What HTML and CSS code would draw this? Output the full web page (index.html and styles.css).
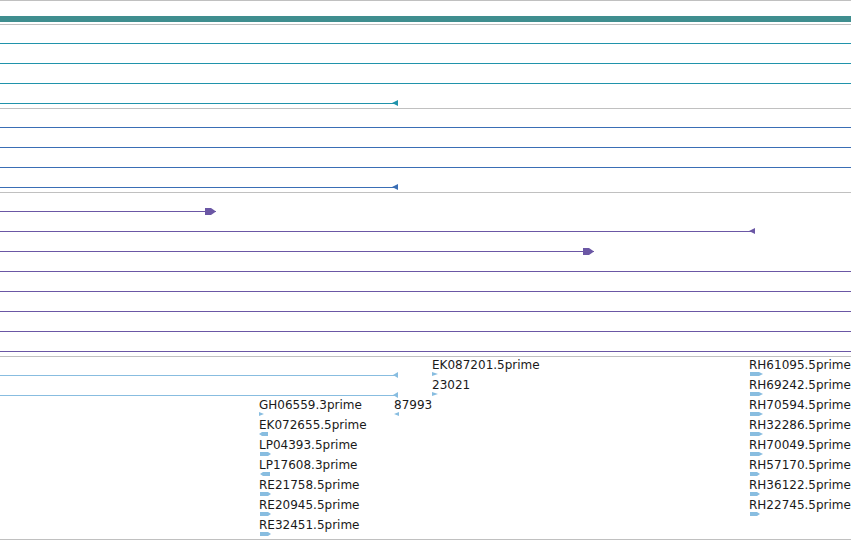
FILE: index.html
```html
<!DOCTYPE html>
<html lang="en">

<head>
    <meta charset="UTF-8">
    <title>Tracks</title>
    <link rel="stylesheet" href="styles.css">
</head>

<body>
    <div class="browser">
        <div class="overview">
            <div class="overview-bar"></div>
        </div>

        <div class="track teal">
            <div class="row"><div class="feat full"></div></div>
            <div class="row"><div class="feat full"></div></div>
            <div class="row"><div class="feat full"></div></div>
            <div class="row">
                <div class="feat" style="width: 398px">
                    <svg class="head-left" width="6" height="6"><polygon points="6,0 6,6 0,3" /></svg>
                </div>
            </div>
        </div>

        <div class="track blue">
            <div class="row"><div class="feat full"></div></div>
            <div class="row"><div class="feat full"></div></div>
            <div class="row"><div class="feat full"></div></div>
            <div class="row">
                <div class="feat" style="width: 398px">
                    <svg class="head-left" width="6" height="6"><polygon points="6,0 6,6 0,3" /></svg>
                </div>
            </div>
        </div>

        <div class="track purple">
            <div class="row">
                <div class="feat" style="width: 216px">
                    <svg class="head-right" width="11" height="7"><polygon points="0,0 6,0 11,3.5 6,7 0,7" /></svg>
                </div>
            </div>
            <div class="row">
                <div class="feat" style="width: 755px">
                    <svg class="head-left" width="6" height="6"><polygon points="6,0 6,6 0,3" /></svg>
                </div>
            </div>
            <div class="row">
                <div class="feat" style="width: 594px">
                    <svg class="head-right" width="11" height="7"><polygon points="0,0 6,0 11,3.5 6,7 0,7" /></svg>
                </div>
            </div>
            <div class="row"><div class="feat full"></div></div>
            <div class="row"><div class="feat full"></div></div>
            <div class="row"><div class="feat full"></div></div>
            <div class="row"><div class="feat full"></div></div>
            <div class="row"><div class="feat full"></div></div>
        </div>

        <div class="track labels">
            <div class="row">
                <div class="feat" style="width: 398px">
                    <svg class="head-left" width="5" height="6"><polygon points="5,0 5,6 0,3" /></svg>
                </div>
            </div>
            <div class="row">
                <div class="feat" style="width: 398px">
                    <svg class="head-left" width="5" height="6"><polygon points="5,0 5,6 0,3" /></svg>
                </div>
            </div>

            <!-- label stacks sit at their genome positions -->
            <div class="stack" style="left: 432px; top: 0px">
                <div class="item"><span class="name">EK087201.5prime</span><svg class="glyph" width="6" height="4"><polygon points="0,0 6,2 0,4" /></svg></div>
                <div class="item"><span class="name">23021</span><svg class="glyph" width="6" height="4"><polygon points="0,0 6,2 0,4" /></svg></div>
            </div>

            <div class="stack" style="left: 394px; top: 40px">
                <div class="item"><span class="name">87993</span><svg class="glyph" width="5" height="4"><polygon points="5,0 0,2 5,4" /></svg></div>
            </div>

            <div class="stack" style="left: 259px; top: 40px">
                <div class="item"><span class="name">GH06559.3prime</span><svg class="glyph" width="5" height="4"><polygon points="0,0 5,2 0,4" /></svg></div>
                <div class="item"><span class="name">EK072655.5prime</span><svg class="glyph" width="9" height="4"><polygon points="3,0 9,0 9,4 3,4 0,2" /></svg></div>
                <div class="item"><span class="name">LP04393.5prime</span><svg class="glyph" width="12" height="4"><polygon points="1,0 9,0 12,2 9,4 1,4" /></svg></div>
                <div class="item"><span class="name">LP17608.3prime</span><svg class="glyph" width="11" height="4"><polygon points="4,0 11,0 11,4 4,4 1,2" /></svg></div>
                <div class="item"><span class="name">RE21758.5prime</span><svg class="glyph" width="12" height="4"><polygon points="1,0 9,0 12,2 9,4 1,4" /></svg></div>
                <div class="item"><span class="name">RE20945.5prime</span><svg class="glyph" width="12" height="4"><polygon points="1,0 9,0 12,2 9,4 1,4" /></svg></div>
                <div class="item"><span class="name">RE32451.5prime</span><svg class="glyph" width="12" height="4"><polygon points="1,0 9,0 12,2 9,4 1,4" /></svg></div>
            </div>

            <div class="stack" style="left: 749px; top: 0px">
                <div class="item"><span class="name">RH61095.5prime</span><svg class="glyph" width="14" height="4"><polygon points="1,0 10,0 14,2 10,4 1,4" /></svg></div>
                <div class="item"><span class="name">RH69242.5prime</span><svg class="glyph" width="14" height="4"><polygon points="1,0 10,0 14,2 10,4 1,4" /></svg></div>
                <div class="item"><span class="name">RH70594.5prime</span><svg class="glyph" width="14" height="4"><polygon points="1,0 10,0 14,2 10,4 1,4" /></svg></div>
                <div class="item"><span class="name">RH32286.5prime</span><svg class="glyph" width="14" height="4"><polygon points="1,0 10,0 14,2 10,4 1,4" /></svg></div>
                <div class="item"><span class="name">RH70049.5prime</span><svg class="glyph" width="14" height="4"><polygon points="1,0 10,0 14,2 10,4 1,4" /></svg></div>
                <div class="item"><span class="name">RH57170.5prime</span><svg class="glyph" width="11" height="4"><polygon points="1,0 8,0 11,2 8,4 1,4" /></svg></div>
                <div class="item"><span class="name">RH36122.5prime</span><svg class="glyph" width="11" height="4"><polygon points="1,0 8,0 11,2 8,4 1,4" /></svg></div>
                <div class="item"><span class="name">RH22745.5prime</span><svg class="glyph" width="11" height="4"><polygon points="1,0 8,0 11,2 8,4 1,4" /></svg></div>
            </div>
        </div>
    </div>
</body>

</html>
```

FILE: styles.css
```css
body {
    margin: 0;
    background-color: #fff;
    font-family: 'DejaVu Sans', sans-serif;
    color: #1a1a1a;
}

.browser {
    width: 851px;
    overflow: hidden;
}

.overview {
    border-top: 1px solid #c0c0c0;
    padding: 15px 0 2px;
}

.overview-bar {
    height: 6px;
    background-color: #3f8e8f;
}

.track {
    border-top: 1px solid #c0c0c0;
    padding-bottom: 3px;
    position: relative;
}

.row {
    box-sizing: border-box;
    height: 20px;
    padding-top: 18px;
}

.feat {
    height: 1px;
    background-color: currentColor;
    position: relative;
}

.feat.full {
    width: 100%;
}

.feat svg {
    position: absolute;
    right: 0;
    top: -3px;
    fill: currentColor;
}

.teal {
    color: #2093ab;
}

.blue {
    color: #3a6eb5;
}

.purple {
    color: #6b57a5;
}

.labels {
    color: #88bde0;
    box-sizing: border-box;
    height: 184px;
    padding-bottom: 0;
    border-bottom: 1px solid #c0c0c0;
}

.stack {
    position: absolute;
    display: flex;
    flex-direction: column;
}

.item {
    height: 20px;
    display: flex;
    flex-direction: column;
    align-items: flex-start;
}

.name {
    font-size: 12px;
    line-height: 13px;
    padding-top: 2px;
    color: #1a1a1a;
    white-space: nowrap;
}

.glyph {
    display: block;
    fill: #88bde0;
}
```
